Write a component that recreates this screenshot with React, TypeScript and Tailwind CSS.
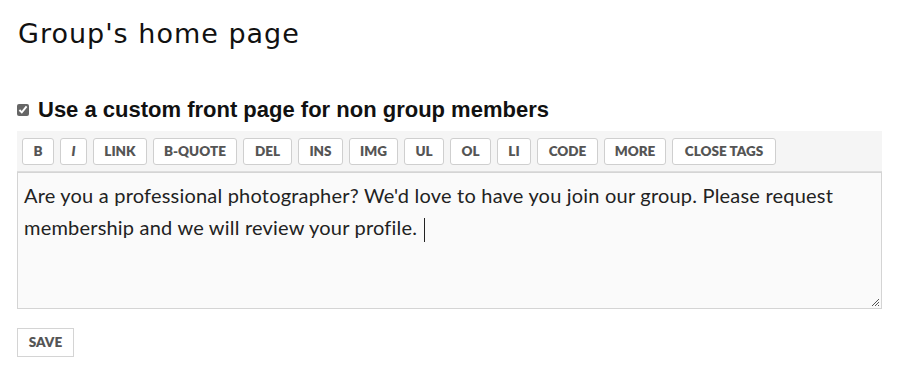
import React from "react";

const tags: [string, number][] = [
  ["B", 32],
  ["I", 27],
  ["LINK", 54],
  ["B-QUOTE", 84],
  ["DEL", 49],
  ["INS", 45],
  ["IMG", 49],
  ["UL", 40],
  ["OL", 41],
  ["LI", 34],
  ["CODE", 61],
  ["MORE", 62],
  ["CLOSE TAGS", 104],
];

export default function App() {
  return (
    <div className="w-[900px] h-[377px] bg-white overflow-hidden pl-[17px] pr-[18px] pt-[18px]">
      <h2 className="text-[27px] leading-[32px] text-[#111] font-['DejaVu_Sans',sans-serif] tracking-[1px] pl-[1px]">
        Group's home page
      </h2>
      <label className="mt-[47px] flex items-center gap-[9px] font-['Liberation_Sans',Arial,sans-serif] font-bold text-[22px] leading-[26px] text-[#111]">
        <input type="checkbox" defaultChecked className="w-[12px] h-[12px] m-0 accent-[#666]" />
        <span>Use a custom front page for non group members</span>
      </label>
      <div className="mt-[8px] bg-[#f5f5f5] flex gap-[6px] px-[5px] pt-[7px] pb-[6px] border-b border-[#ddd]">
        {tags.map(([t, w]) => (
          <button
            key={t}
            style={{ width: w }}
            className={`h-[27px] bg-white border border-[#cfcfcf] rounded-[3px] text-[13.5px] font-extrabold text-[#555] font-['Lato',sans-serif] ${t === "I" ? "italic" : ""}`}
          >
            {t}
          </button>
        ))}
      </div>
      <div className="relative h-[137px] bg-[#fafafa] border border-[#d4d4d4] px-[6px] pt-[6px] font-['Lato',sans-serif] text-[20px] leading-[32px] tracking-[0.2px] text-[#222]">
        Are you a professional photographer? We'd love to have you join our group. Please request membership and we will review your profile.{" "}
        <span className="inline-block w-[1px] h-[24px] bg-[#222] align-middle ml-[2px]" />
        <svg className="absolute right-[1px] bottom-[1px]" width="10" height="10" viewBox="0 0 10 10">
          <path d="M9 2 L2 9 M9 5 L5 9 M9 8 L8 9" stroke="#555" strokeWidth="1" />
        </svg>
      </div>
      <button className="mt-[19px] h-[29px] w-[57px] bg-white border border-[#d4d4d4] text-[13.5px] font-extrabold text-[#555] font-['Lato',sans-serif]">
        SAVE
      </button>
    </div>
  );
}
